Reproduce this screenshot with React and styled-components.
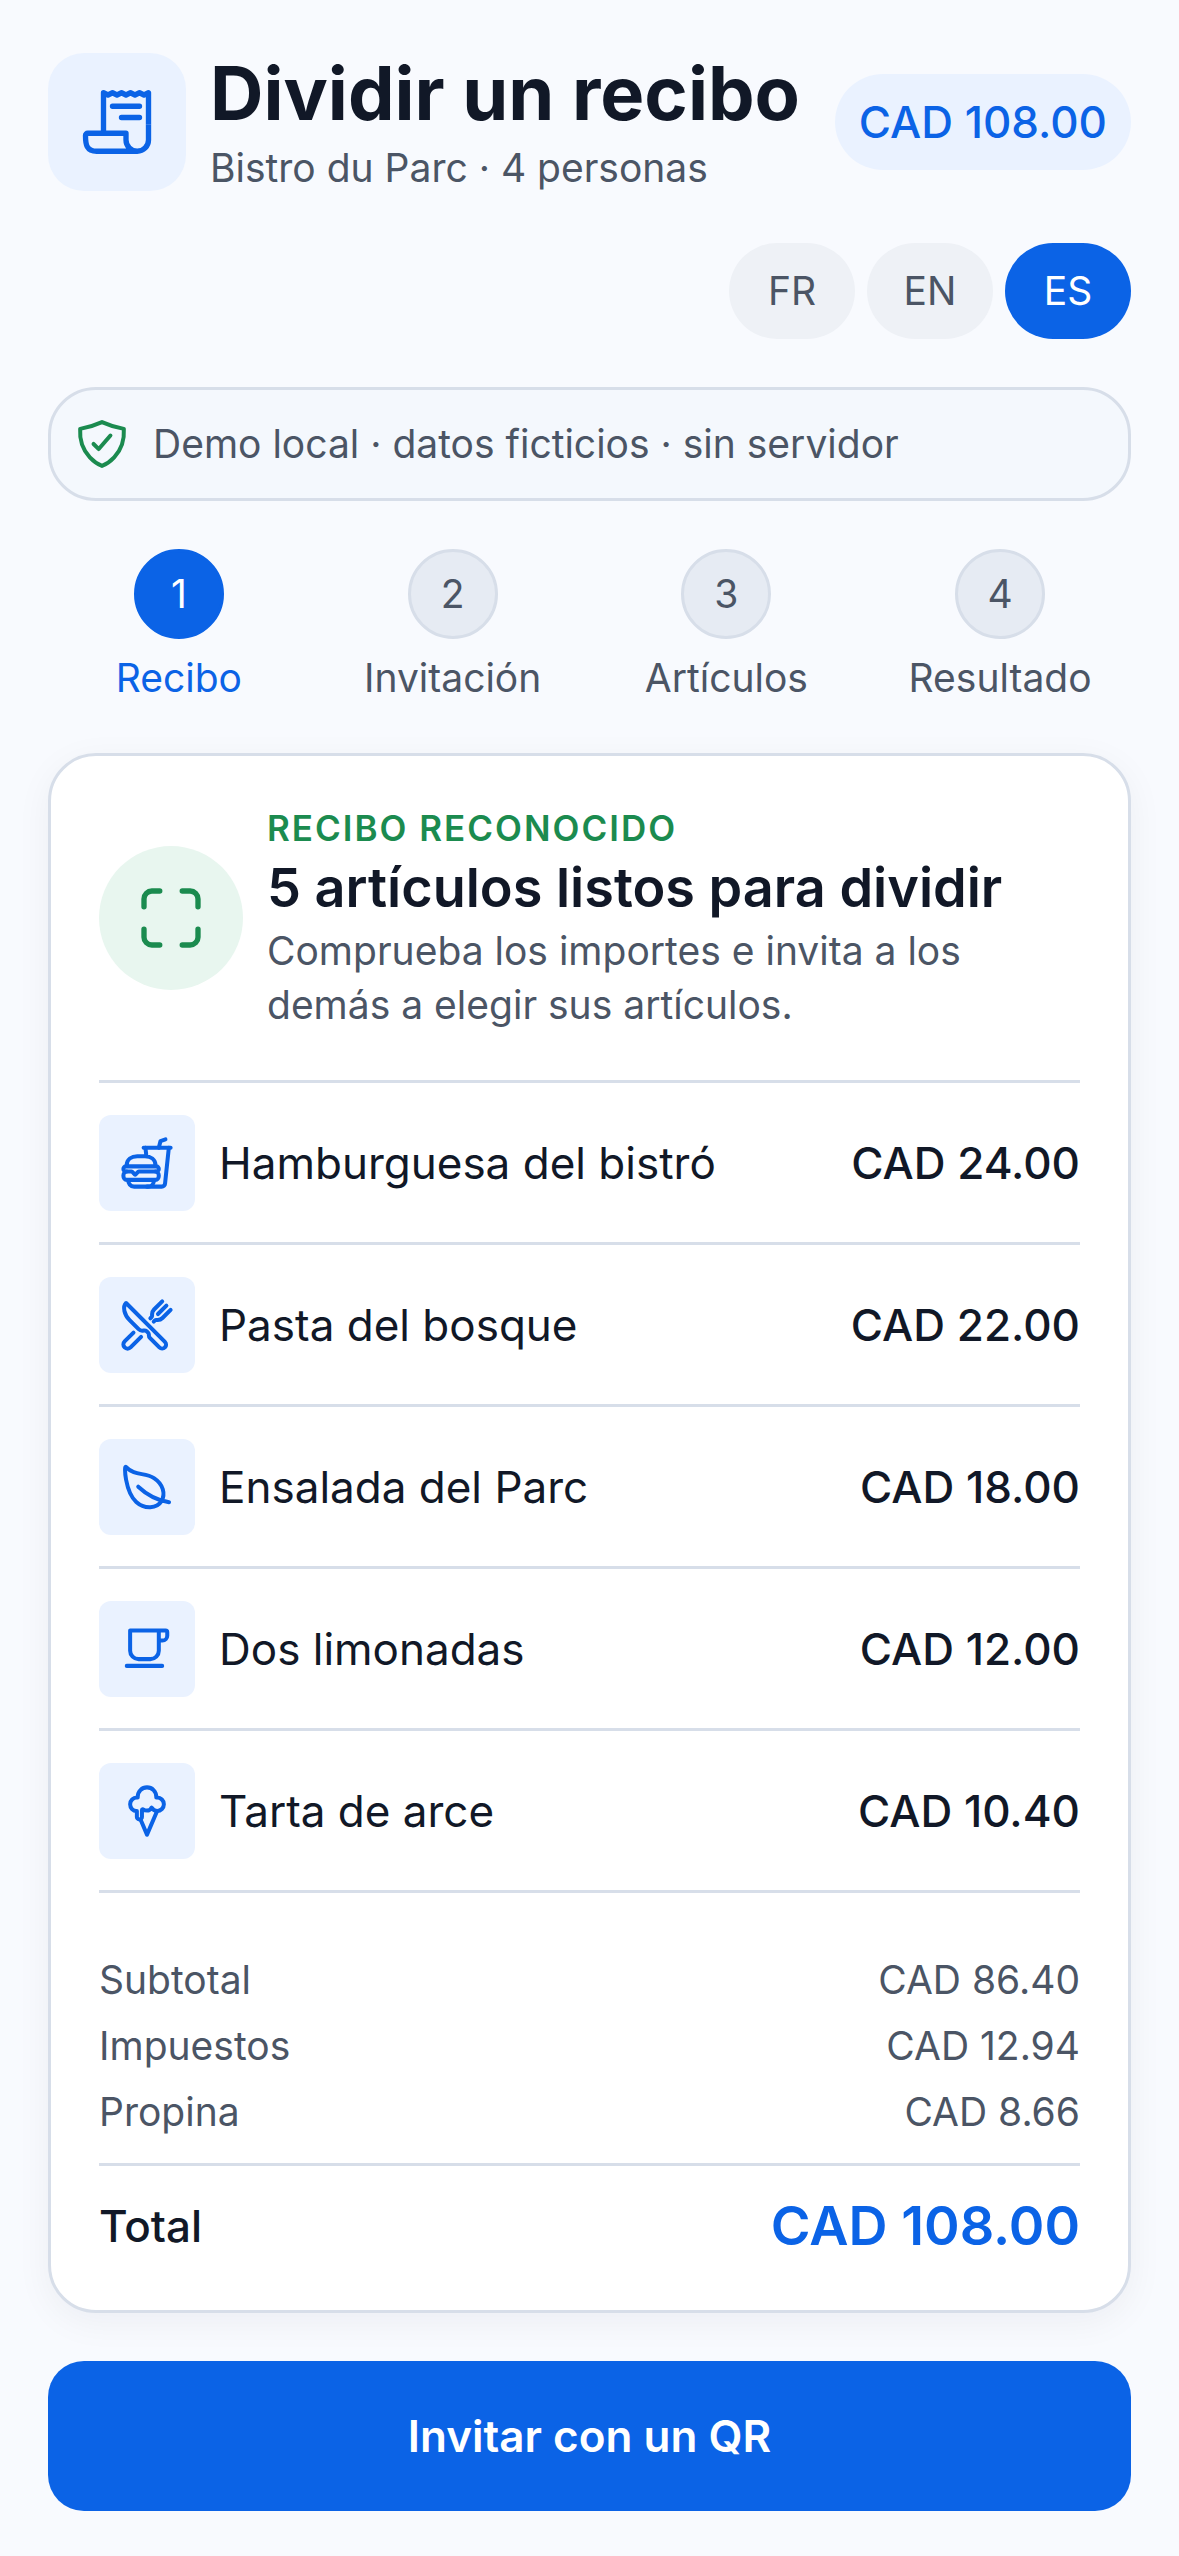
import React, { useState } from 'react';
import styled, { createGlobalStyle, ThemeProvider } from 'styled-components';
import {
  IoCafeOutline,
  IoFastFoodOutline,
  IoIceCreamOutline,
  IoLeafOutline,
  IoReceiptOutline,
  IoRestaurantOutline,
  IoScanOutline,
  IoShieldCheckmarkOutline,
} from 'react-icons/io5';

const theme = {
  colors: {
    page: '#f8fafe',
    surface: '#ffffff',
    notice: '#f4f8fd',
    ink: '#111827',
    muted: '#4b5565',
    line: '#d7dee9',
    primary: '#0b63e6',
    primarySoft: '#eaf2ff',
    success: '#1b8b4f',
    successSoft: '#e8f6ef',
    chip: '#eef1f6',
    step: '#e6ebf3',
  },
  space: ['12px', '24px', '48px'],
};

const items = [
  { name: 'Hamburguesa del bistró', price: 24, icon: IoFastFoodOutline },
  { name: 'Pasta del bosque', price: 22, icon: IoRestaurantOutline },
  { name: 'Ensalada del Parc', price: 18, icon: IoLeafOutline },
  { name: 'Dos limonadas', price: 12, icon: IoCafeOutline },
  { name: 'Tarta de arce', price: 10.4, icon: IoIceCreamOutline },
];

const charges = [
  { label: 'Subtotal', amount: 86.4 },
  { label: 'Impuestos', amount: 12.94 },
  { label: 'Propina', amount: 8.66 },
];

const steps = ['Recibo', 'Invitación', 'Artículos', 'Resultado'];
const languages = ['FR', 'EN', 'ES'];

const money = value => `CAD ${value.toFixed(2)}`;

const GlobalStyle = createGlobalStyle`
  * {
    box-sizing: border-box;
  }

  body {
    margin: 0;
    background: ${props => props.theme.colors.page};
    color: ${props => props.theme.colors.ink};
    font-family: Inter, 'Liberation Sans', sans-serif;
    font-size: 39px;
    line-height: 54px;
  }

  h1, h2, p, ul, ol, dl, dt, dd {
    margin: 0;
    padding: 0;
  }

  ul, ol {
    list-style: none;
  }

  button {
    border: 0;
    font: inherit;
    cursor: pointer;
  }

  svg {
    display: block;
    flex: none;
  }

  /* slightly heavier outline icons */
  svg [stroke-width='32'] {
    stroke-width: 38px;
  }
`;

const Page = styled.main`
  display: flex;
  flex-direction: column;
  gap: ${props => props.theme.space[2]};
  padding: 48px 48px 45px;
`;

const Header = styled.header`
  display: flex;
  align-items: center;
  gap: ${props => props.theme.space[1]};
`;

const AppIcon = styled.div`
  display: flex;
  flex: none;
  align-items: center;
  justify-content: center;
  width: 138px;
  height: 138px;
  border-radius: 36px;
  background: ${props => props.theme.colors.primarySoft};
  color: ${props => props.theme.colors.primary};
`;

const Heading = styled.div`
  display: flex;
  flex: 1;
  flex-direction: column;
  gap: 3px;
  min-width: 0;
`;

const Title = styled.h1`
  font-size: 74px;
  font-weight: 700;
  line-height: 90px;
  white-space: nowrap;
`;

const Subtitle = styled.p`
  color: ${props => props.theme.colors.muted};
`;

const AmountPill = styled.div`
  flex: none;
  padding: 0 24px;
  border-radius: 48px;
  background: ${props => props.theme.colors.primarySoft};
  color: ${props => props.theme.colors.primary};
  font-size: 44px;
  font-weight: 500;
  line-height: 96px;
`;

const LanguageBar = styled.nav`
  display: flex;
  justify-content: flex-end;
  gap: ${props => props.theme.space[0]};
`;

const LanguageButton = styled.button`
  width: 126px;
  height: 96px;
  padding: 0;
  border-radius: 48px;
  background: ${props => props.$active ? props.theme.colors.primary : props.theme.colors.chip};
  color: ${props => props.$active ? '#fff' : props.theme.colors.muted};
`;

const Notice = styled.div`
  display: flex;
  align-items: center;
  gap: ${props => props.theme.space[1]};
  padding: 27px 24px;
  border: 3px solid ${props => props.theme.colors.line};
  border-radius: 48px;
  background: ${props => props.theme.colors.notice};
  color: ${props => props.theme.colors.muted};

  svg {
    color: ${props => props.theme.colors.success};
  }
`;

const Steps = styled.ol`
  display: grid;
  grid-template-columns: repeat(4, 1fr);
  gap: ${props => props.theme.space[0]};
`;

const Step = styled.li`
  display: flex;
  flex-direction: column;
  align-items: center;
  gap: ${props => props.theme.space[0]};
  color: ${props => props.$active ? props.theme.colors.primary : props.theme.colors.muted};
`;

const StepNumber = styled.span`
  display: flex;
  align-items: center;
  justify-content: center;
  width: 90px;
  height: 90px;
  border: 3px solid ${props => props.$active ? props.theme.colors.primary : props.theme.colors.line};
  border-radius: 50%;
  background: ${props => props.$active ? props.theme.colors.primary : props.theme.colors.step};
  color: ${props => props.$active ? '#fff' : 'inherit'};
`;

const Card = styled.section`
  padding: 48px;
  border: 3px solid ${props => props.theme.colors.line};
  border-radius: 48px;
  background: ${props => props.theme.colors.surface};
  box-shadow: 0 9px 36px rgba(17, 24, 39, 0.05);
`;

const CardHeader = styled.div`
  display: flex;
  align-items: center;
  gap: ${props => props.theme.space[1]};
  padding-bottom: 48px;
  border-bottom: 3px solid ${props => props.theme.colors.line};
`;

const ScanBadge = styled.div`
  display: flex;
  flex: none;
  align-items: center;
  justify-content: center;
  width: 144px;
  height: 144px;
  border-radius: 50%;
  background: ${props => props.theme.colors.successSoft};
  color: ${props => props.theme.colors.success};
`;

const Eyebrow = styled.p`
  color: ${props => props.theme.colors.success};
  font-size: 35px;
  font-weight: 600;
  letter-spacing: 2px;
  line-height: 48px;
  text-transform: uppercase;
`;

const CardTitle = styled.h2`
  font-size: 54px;
  font-weight: 600;
  line-height: 66px;
`;

const CardText = styled.p`
  color: ${props => props.theme.colors.muted};
`;

const Item = styled.li`
  display: flex;
  align-items: center;
  gap: ${props => props.theme.space[1]};
  height: 162px;
  border-bottom: 3px solid ${props => props.theme.colors.line};
  font-size: 44px;
`;

const ItemIcon = styled.span`
  display: flex;
  align-items: center;
  justify-content: center;
  width: 96px;
  height: 96px;
  border-radius: 12px;
  background: ${props => props.theme.colors.primarySoft};
  color: ${props => props.theme.colors.primary};
`;

const ItemName = styled.span`
  flex: 1;
`;

const ItemPrice = styled.span`
  font-weight: 500;
`;

const Totals = styled.dl`
  display: flex;
  flex-direction: column;
  gap: ${props => props.theme.space[0]};
  padding-top: 60px;
`;

const ChargeRow = styled.div`
  display: flex;
  justify-content: space-between;
  color: ${props => props.theme.colors.muted};
`;

const TotalRow = styled.div`
  display: flex;
  align-items: center;
  justify-content: space-between;
  margin-top: 12px;
  padding-top: 24px;
  border-top: 3px solid ${props => props.theme.colors.line};
  font-size: 44px;
  font-weight: 500;
  line-height: 72px;
`;

const TotalAmount = styled.dd`
  color: ${props => props.theme.colors.primary};
  font-size: 54px;
  font-weight: 600;
`;

const InviteButton = styled.button`
  height: 150px;
  border-radius: 36px;
  background: ${props => props.theme.colors.primary};
  color: #fff;
  font-size: 44px;
  font-weight: 600;
`;

function App() {
  const [language, setLanguage] = useState('ES');
  const currentStep = 0;
  const total = charges.reduce((sum, charge) => sum + charge.amount, 0);

  return (
    <ThemeProvider theme={theme}>
      <GlobalStyle />
      <Page>
        <Header>
          <AppIcon><IoReceiptOutline size={72} /></AppIcon>
          <Heading>
            <Title>Dividir un recibo</Title>
            <Subtitle>Bistro du Parc · 4 personas</Subtitle>
          </Heading>
          <AmountPill>{money(total)}</AmountPill>
        </Header>

        <LanguageBar>
          {languages.map(code => (
            <LanguageButton
              key={code}
              type="button"
              $active={code === language}
              aria-pressed={code === language}
              onClick={() => setLanguage(code)}
            >
              {code}
            </LanguageButton>
          ))}
        </LanguageBar>

        <Notice>
          <IoShieldCheckmarkOutline size={54} />
          <p>Demo local · datos ficticios · sin servidor</p>
        </Notice>

        <Steps>
          {steps.map((label, index) => (
            <Step key={label} $active={index === currentStep}>
              <StepNumber $active={index === currentStep}>{index + 1}</StepNumber>
              <span>{label}</span>
            </Step>
          ))}
        </Steps>

        <Card>
          <CardHeader>
            <ScanBadge><IoScanOutline size={72} /></ScanBadge>
            <Heading>
              <Eyebrow>Recibo reconocido</Eyebrow>
              <CardTitle>5 artículos listos para dividir</CardTitle>
              <CardText>Comprueba los importes e invita a los demás a elegir sus artículos.</CardText>
            </Heading>
          </CardHeader>

          <ul>
            {items.map(({ name, price, icon: Icon }) => (
              <Item key={name}>
                <ItemIcon><Icon size={54} /></ItemIcon>
                <ItemName>{name}</ItemName>
                <ItemPrice>{money(price)}</ItemPrice>
              </Item>
            ))}
          </ul>

          <Totals>
            {charges.map(({ label, amount }) => (
              <ChargeRow key={label}>
                <dt>{label}</dt>
                <dd>{money(amount)}</dd>
              </ChargeRow>
            ))}
            <TotalRow>
              <dt>Total</dt>
              <TotalAmount>{money(total)}</TotalAmount>
            </TotalRow>
          </Totals>
        </Card>

        <InviteButton type="button">Invitar con un QR</InviteButton>
      </Page>
    </ThemeProvider>
  );
}

export default App;
